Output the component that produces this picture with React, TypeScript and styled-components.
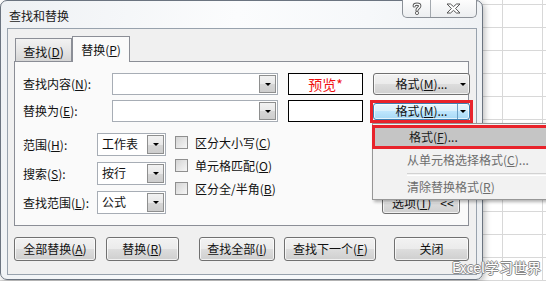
import { Fragment } from 'react';
import { createGlobalStyle, styled } from 'styled-components';

const GlobalStyle = createGlobalStyle`
  html, body {
    margin: 0;
    padding: 0;
  }
  body {
    font-family: "Noto Sans CJK SC", "Liberation Sans", sans-serif;
    font-size: 12px;
    color: #111;
  }
  * {
    box-sizing: border-box;
  }
`;

const Sheet = styled.div`
  position: relative;
  width: 546px;
  height: 281px;
  overflow: hidden;
  background-color: #fff;
  background-image: repeating-linear-gradient(
      90deg,
      #d8d8d8 0 1px,
      transparent 1px 40px
    ),
    repeating-linear-gradient(180deg, #d8d8d8 0 1px, transparent 1px 23px);
  background-position: 502px 0, 0 4px;
`;

const Dialog = styled.div`
  position: absolute;
  left: 0;
  top: 0;
  width: 483px;
  height: 280px;
  border: 1px solid #6b7480;
  border-radius: 7px;
  background: linear-gradient(100deg, #eef1f4 0%, #fbfcfd 45%, #f6f8fa 70%, #eceff2 100%);
  box-shadow: 2px 2px 6px rgba(0, 0, 0, 0.25);
`;

const TitleBar = styled.div`
  display: flex;
  justify-content: space-between;
  align-items: flex-start;
  height: 27px;
`;

const Title = styled.div`
  padding: 7px 0 0 8px;
  line-height: 16px;
  color: #1a1a1a;
`;

const CaptionGroup = styled.div`
  display: flex;
  margin: -1px 5px 0 0;
  height: 18px;
  border: 1px solid #8b9097;
  border-top: none;
  border-radius: 0 0 5px 5px;
  overflow: hidden;
  background: linear-gradient(#fdfdfd, #eceef0);
`;

const CaptionButton = styled.div<{ $w: number; $divider?: boolean }>`
  display: flex;
  align-items: center;
  justify-content: center;
  width: ${({ $w }) => $w}px;
  border-left: ${({ $divider }) => ($divider ? '1px solid #a3a8ae' : 'none')};
`;

const Client = styled.div`
  display: flex;
  flex-direction: column;
  margin: 0 5px 0 6px;
  height: 247px;
  padding: 7px 7px 0 6px;
  border: 1px solid #98a2ad;
  background: #f0f0f0;
`;

const TabRow = styled.div`
  display: flex;
  align-items: flex-end;
  height: 26px;
  margin-bottom: -1px;
  padding-left: 1px;
  position: relative;
  z-index: 1;
`;

const Tab = styled.div<{ $active?: boolean }>`
  display: flex;
  align-items: center;
  justify-content: center;
  width: ${({ $active }) => ($active ? 58 : 57)}px;
  height: ${({ $active }) => ($active ? 26 : 23)}px;
  margin-bottom: ${({ $active }) => ($active ? 0 : 1)}px;
  padding-top: ${({ $active }) => ($active ? 0 : 2)}px;
  border: 1px solid #8b8e96;
  border-bottom: none;
  background: ${({ $active }) =>
    $active ? '#fafafa' : 'linear-gradient(#f2f2f2, #e6e6e6 50%, #d6d6d6)'};
`;

const Panel = styled.div`
  display: flex;
  flex-direction: column;
  height: 165px;
  padding: 11px 8px 0 8px;
  border: 1px solid #8b8e96;
  background: #fafafa;
`;

const FieldGrid = styled.div`
  display: grid;
  grid-template-columns: 79px 166px 75px 97px;
  grid-auto-rows: 22px;
  column-gap: 10px;
  row-gap: 5px;
  align-items: center;
`;

const Label = styled.span`
  white-space: nowrap;
  line-height: 16px;
`;

const ComboBox = styled.div<{ $w: number }>`
  display: flex;
  justify-content: space-between;
  align-items: stretch;
  width: ${({ $w }) => $w}px;
  height: 100%;
  padding: 1px 1px 1px 4px;
  border: 1px solid #a7adb5;
  background: #fff;
  line-height: 18px;
`;

const DropButton = styled.div`
  display: flex;
  align-items: center;
  justify-content: center;
  width: 17px;
  border: 1px solid #8e8f8f;
  background: linear-gradient(#f2f2f2, #e8e8e8 50%, #d6d6d6 51%, #cdcdcd);
`;

const Triangle = styled.span<{ $size: number }>`
  width: 0;
  height: 0;
  border-left: ${({ $size }) => $size}px solid transparent;
  border-right: ${({ $size }) => $size}px solid transparent;
  border-top: ${({ $size }) => $size}px solid #000;
`;

const PreviewBox = styled.div`
  display: flex;
  align-items: center;
  justify-content: center;
  height: 100%;
  border: 1px solid #000;
  background: #fff;
  color: #f01010;
  font-size: 14px;
`;

const PushButton = styled.div<{ $hot?: boolean }>`
  display: flex;
  align-items: center;
  height: 100%;
  border: 1px solid ${({ $hot }) => ($hot ? '#3c7fb1' : '#707070')};
  border-radius: 3px;
  box-shadow: inset 0 0 0 1px rgba(255, 255, 255, 0.7);
  background: ${({ $hot }) =>
    $hot
      ? 'linear-gradient(#e8f5fc, #d9f0fc 45%, #bee6fd 50%, #a7d9f5)'
      : 'linear-gradient(#f2f2f2, #ebebeb 50%, #dddddd 51%, #cfcfcf)'};
  white-space: nowrap;
  line-height: 16px;
`;

const FormatButton = styled(PushButton)`
  padding-left: 12px;
`;

const ButtonText = styled.span`
  flex: 1;
  text-align: center;
`;

const ArrowZone = styled.span<{ $split?: boolean }>`
  display: flex;
  align-items: center;
  justify-content: center;
  width: 11px;
  height: 100%;
  margin-right: 1px;
  border-left: 1px solid ${({ $split }) => ($split ? '#6a9ec2' : 'transparent')};
`;

const RedFrame = styled.div`
  position: relative;
  margin: -1px -3px;
  height: 23px;
  border: 3px solid #e8232b;
`;

const Menu = styled.div`
  position: absolute;
  left: -1px;
  top: 20px;
  z-index: 5;
  width: 181px;
  padding: 1px 0 0 0;
  border: 1px solid #979797;
  background: #f2f2f2;
  box-shadow: 2px 2px 3px rgba(0, 0, 0, 0.3);
`;

const MenuItem = styled.div<{ $selected?: boolean }>`
  display: flex;
  align-items: center;
  height: ${({ $selected }) => ($selected ? 24 : 23)}px;
  margin: ${({ $selected }) => ($selected ? '0 -1px' : '0')};
  padding-left: 34px;
  border: ${({ $selected }) => ($selected ? '3px solid #e8232b' : 'none')};
  background: ${({ $selected }) => ($selected ? '#c5c5c5' : 'transparent')};
  color: ${({ $selected }) => ($selected ? '#1a1a1a' : '#6d6d6d')};
  white-space: nowrap;
  line-height: 16px;
`;

const MenuSeparator = styled.div`
  height: 3px;
  margin: 1px 2px 0 34px;
  border-top: 1px solid #d2d2d2;
  border-bottom: 1px solid #fff;
`;

const LowerSection = styled.div`
  display: flex;
  align-items: flex-start;
  margin-top: 11px;
`;

const SelectGrid = styled.div`
  display: grid;
  grid-template-columns: 74px 69px;
  grid-auto-rows: 23px;
  row-gap: 6px;
  align-items: center;
`;

const CheckList = styled.div`
  display: flex;
  flex-direction: column;
  gap: 10px;
  margin-left: 9px;
  padding-top: 3px;
`;

const CheckItem = styled.label`
  display: flex;
  align-items: center;
  gap: 7px;
  height: 13px;
  white-space: nowrap;
  line-height: 16px;
`;

const CheckBox = styled.span`
  width: 13px;
  height: 13px;
  border: 1px solid #8f8f8f;
  background: linear-gradient(135deg, #d4d4d4, #f6f6f6);
`;

const OptionsButton = styled(PushButton)`
  width: 78px;
  height: 23px;
  margin: 58px 0 0 auto;
  padding-left: 9px;
  gap: 9px;
`;

const ButtonRow = styled.div`
  display: flex;
  margin-top: 11px;
`;

const DialogButton = styled(PushButton)<{ $w: number; $ml: number }>`
  justify-content: center;
  width: ${({ $w }) => $w}px;
  height: 24px;
  margin-left: ${({ $ml }) => $ml}px;
`;

const Watermark = styled.div`
  position: absolute;
  right: 5px;
  bottom: 6px;
  z-index: 10;
  font-size: 14px;
  line-height: 16px;
  color: #fff;
  text-shadow: -1px 0 #8a8a8a, 1px 0 #8a8a8a, 0 -1px #8a8a8a, 0 1px #8a8a8a;
  white-space: nowrap;
`;

const HelpIcon = () => (
  <svg width="10" height="13" viewBox="0 0 10 13">
    <path
      d="M2.2 4 C2.2 1.6 7.8 1.6 7.8 4 C7.8 5.8 5 6 5 8.2"
      fill="none"
      stroke="#5a5a5a"
      strokeWidth="3.2"
      strokeLinecap="round"
    />
    <path
      d="M2.2 4 C2.2 1.6 7.8 1.6 7.8 4 C7.8 5.8 5 6 5 8.2"
      fill="none"
      stroke="#fff"
      strokeWidth="1.3"
      strokeLinecap="round"
    />
    <circle cx="5" cy="11" r="1.6" fill="#fff" stroke="#5a5a5a" strokeWidth="0.9" />
  </svg>
);

const CloseIcon = () => (
  <svg width="15" height="11" viewBox="0 0 15 11">
    <path
      d="M1 1 H4.5 L7.5 3.6 L10.5 1 H14 L9.6 5.5 L14 10 H10.5 L7.5 7.4 L4.5 10 H1 L5.4 5.5 Z"
      fill="#fff"
      stroke="#555"
      strokeWidth="1"
      strokeLinejoin="round"
    />
  </svg>
);

const Acc = ({ k }: { k: string }) => (
  <>
    (<u>{k}</u>)
  </>
);

const Combo = ({ w, value }: { w: number; value?: string }) => (
  <ComboBox $w={w}>
    <span>{value}</span>
    <DropButton>
      <Triangle $size={3} />
    </DropButton>
  </ComboBox>
);

const selects = [
  { label: '范围', key: 'H', value: '工作表' },
  { label: '搜索', key: 'S', value: '按行' },
  { label: '查找范围', key: 'L', value: '公式' },
];

const checks = [
  { label: '区分大小写', key: 'C' },
  { label: '单元格匹配', key: 'O' },
  { label: '区分全/半角', key: 'B' },
];

const buttons = [
  { label: '全部替换', key: 'A', w: 82, ml: 0 },
  { label: '替换', key: 'R', w: 73, ml: 10 },
  { label: '查找全部', key: 'I', w: 77, ml: 20 },
  { label: '查找下一个', key: 'F', w: 92, ml: 9 },
  { label: '关闭', key: '', w: 75, ml: 18 },
];

export default function App() {
  return (
    <Sheet>
      <GlobalStyle />
      <Dialog>
        <TitleBar>
          <Title>查找和替换</Title>
          <CaptionGroup>
            <CaptionButton $w={27}>
              <HelpIcon />
            </CaptionButton>
            <CaptionButton $w={46} $divider>
              <CloseIcon />
            </CaptionButton>
          </CaptionGroup>
        </TitleBar>
        <Client>
          <TabRow>
            <Tab>
              查找<Acc k="D" />
            </Tab>
            <Tab $active>
              替换<Acc k="P" />
            </Tab>
          </TabRow>
          <Panel>
            <FieldGrid>
              <Label>
                查找内容<Acc k="N" />:
              </Label>
              <Combo w={166} />
              <PreviewBox>预览*</PreviewBox>
              <FormatButton>
                <ButtonText>
                  格式<Acc k="M" />...
                </ButtonText>
                <ArrowZone>
                  <Triangle $size={3} />
                </ArrowZone>
              </FormatButton>

              <Label>
                替换为<Acc k="E" />:
              </Label>
              <Combo w={166} />
              <PreviewBox />
              <RedFrame>
                <FormatButton $hot>
                  <ButtonText>
                    格式<Acc k="M" />...
                  </ButtonText>
                  <ArrowZone $split>
                    <Triangle $size={3} />
                  </ArrowZone>
                </FormatButton>
                <Menu>
                  <MenuItem $selected>
                    格式<Acc k="F" />...
                  </MenuItem>
                  <MenuItem>
                    从单元格选择格式<Acc k="C" />...
                  </MenuItem>
                  <MenuSeparator />
                  <MenuItem>
                    清除替换格式<Acc k="R" />
                  </MenuItem>
                </Menu>
              </RedFrame>
            </FieldGrid>

            <LowerSection>
              <SelectGrid>
                {selects.map((s) => (
                  <Fragment key={s.key}>
                    <Label>
                      {s.label}
                      <Acc k={s.key} />:
                    </Label>
                    <Combo w={69} value={s.value} />
                  </Fragment>
                ))}
              </SelectGrid>
              <CheckList>
                {checks.map((c) => (
                  <CheckItem key={c.key}>
                    <CheckBox />
                    <span>
                      {c.label}
                      <Acc k={c.key} />
                    </span>
                  </CheckItem>
                ))}
              </CheckList>
              <OptionsButton>
                <span>
                  选项<Acc k="T" />
                </span>
                <span>&lt;&lt;</span>
              </OptionsButton>
            </LowerSection>
          </Panel>
          <ButtonRow>
            {buttons.map((b) => (
              <DialogButton key={b.label} $w={b.w} $ml={b.ml}>
                {b.label}
                {b.key && <Acc k={b.key} />}
              </DialogButton>
            ))}
          </ButtonRow>
        </Client>
      </Dialog>
      <Watermark>Excel学习世界</Watermark>
    </Sheet>
  );
}
